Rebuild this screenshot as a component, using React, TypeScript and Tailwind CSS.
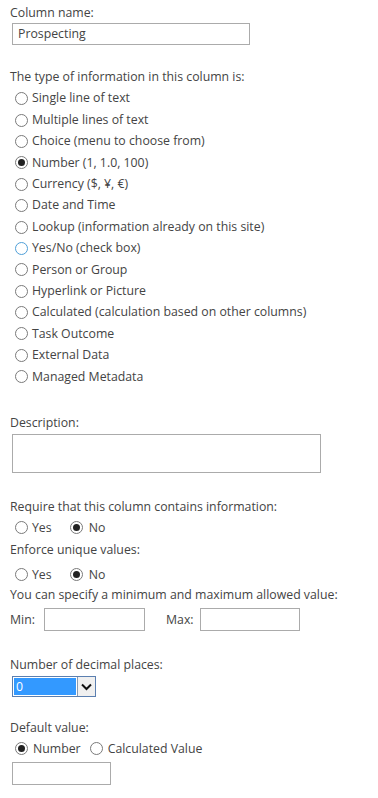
import React from 'react';

const TYPES = [
  'Single line of text',
  'Multiple lines of text',
  'Choice (menu to choose from)',
  'Number (1, 1.0, 100)',
  'Currency ($, ¥, €)',
  'Date and Time',
  'Lookup (information already on this site)',
  'Yes/No (check box)',
  'Person or Group',
  'Hyperlink or Picture',
  'Calculated (calculation based on other columns)',
  'Task Outcome',
  'External Data',
  'Managed Metadata',
];

// Plain radio circle, drawn with borders
const Radio = ({ checked = false, hover = false }: { checked?: boolean; hover?: boolean }) => (
  <span
    className={
      hover
        ? 'flex h-[13px] w-[13px] shrink-0 items-center justify-center rounded-full border border-[#4f9fd8] bg-white'
        : 'flex h-[13px] w-[13px] shrink-0 items-center justify-center rounded-full border border-[#7a7a7a] bg-white'
    }
  >
    {checked && <span className="h-[7px] w-[7px] rounded-full bg-[#222]" />}
  </span>
);

const Label = ({ children, className = '' }: { children: React.ReactNode; className?: string }) => (
  <div className={'h-[20px] leading-[20px] ' + className}>{children}</div>
);

export default function App() {
  return (
    <div
      className="min-h-[798px] bg-white pl-[10px] pt-[3px] text-[12.3px] text-[#444]"
      style={{ fontFamily: '"Open Sans", "Noto Sans", sans-serif' }}
    >
      <Label>Column name:</Label>
      <div className="ml-[2px] flex h-[22px] w-[238px] items-center border border-[#ababab] pl-[5px]">
        Prospecting
      </div>

      <Label className="mt-[22px]">The type of information in this column is:</Label>
      <div className="mt-[1px] flex flex-col">
        {TYPES.map((t, i) => (
          <div key={t} className="flex h-[21.4px] items-center gap-[4px] pl-[5px]">
            <Radio checked={i === 3} hover={i === 7} />
            <span>{t}</span>
          </div>
        ))}
      </div>

      <Label className="mt-[26px]">Description:</Label>
      <div className="ml-[2px] mt-[1px] h-[39px] w-[309px] border border-[#ababab]" />

      <Label className="mt-[24px]">Require that this column contains information:</Label>
      <div className="flex h-[21px] items-center pl-[5px]">
        <Radio />
        <span className="ml-[4px]">Yes</span>
        <span className="ml-[18px]"><Radio checked /></span>
        <span className="ml-[6px]">No</span>
      </div>

      <Label className="mt-[2px]">Enforce unique values:</Label>
      <div className="mt-[4px] flex h-[21px] items-center pl-[5px]">
        <Radio />
        <span className="ml-[4px]">Yes</span>
        <span className="ml-[18px]"><Radio checked /></span>
        <span className="ml-[6px]">No</span>
      </div>

      <Label>You can specify a minimum and maximum allowed value:</Label>
      <div className="mt-[3px] flex h-[23px] items-center">
        <span className="w-[34px]">Min:</span>
        <div className="h-[23px] w-[101px] border border-[#ababab]" />
        <span className="ml-[21px] w-[34px]">Max:</span>
        <div className="h-[23px] w-[100px] border border-[#ababab]" />
      </div>

      <Label className="mt-[24px]">Number of decimal places:</Label>
      <div className="ml-[2px] mt-[1px] flex h-[21px] w-[84px] border border-[#5b7fb0]">
        <div className="flex flex-1 items-center border border-white bg-[#3399ff] pl-[2px] text-white">0</div>
        <div className="flex w-[18px] items-center justify-center border-l border-[#8a9bb0] bg-[#f0f0f0]">
          <svg width="11" height="8" viewBox="0 0 11 8">
            <path d="M1 1.5 L5.5 6 L10 1.5" fill="none" stroke="#111" strokeWidth="2" />
          </svg>
        </div>
      </div>

      <Label className="mt-[21px]">Default value:</Label>
      <div className="flex h-[21px] items-center pl-[5px]">
        <Radio checked />
        <span className="ml-[5px]">Number</span>
        <span className="ml-[9px]"><Radio /></span>
        <span className="ml-[5px]">Calculated Value</span>
      </div>
      <div className="ml-[2px] mt-[3px] h-[23px] w-[99px] border border-[#ababab]" />
    </div>
  );
}
